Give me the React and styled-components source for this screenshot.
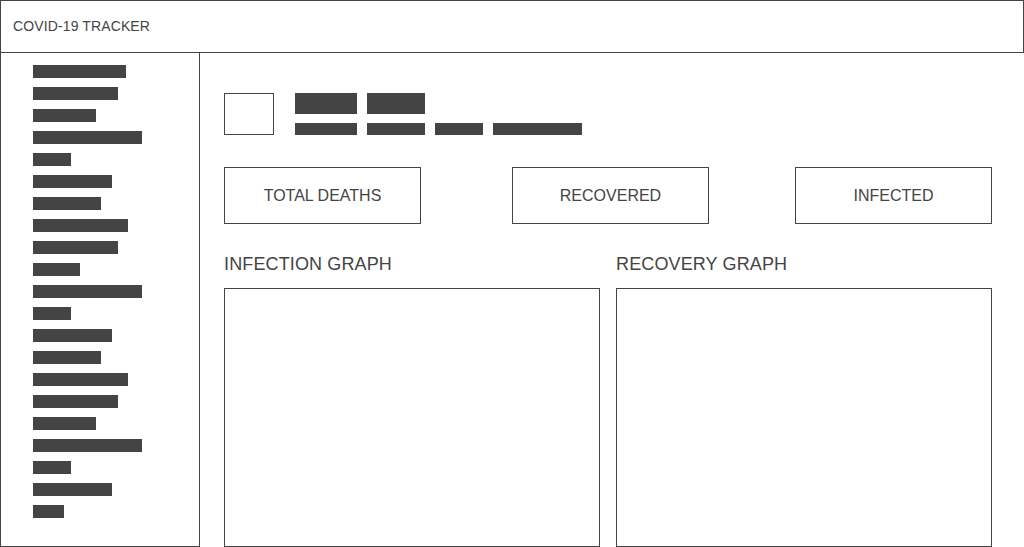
import React from "react";
import styled, { createGlobalStyle } from "styled-components";

const GlobalStyle = createGlobalStyle`
  html, body { margin: 0; padding: 0; background: #fff; }
  body { font-family: "Liberation Sans", Arial, sans-serif; color: #444; }
  * { box-sizing: border-box; }
`;

const Page = styled.div`
  display: flex;
  flex-direction: column;
  width: 1024px;
  height: 100vh;
`;

const Header = styled.header`
  height: 53px;
  flex: none;
  border: 1px solid #444;
  display: flex;
  align-items: center;
  padding: 0 0 1px 12px;
  font-size: 14px;
  line-height: 16px;
  letter-spacing: 0.12px;
  color: #444;
`;

const Body = styled.div`
  flex: 1;
  display: flex;
  min-height: 0;
`;

const Sidebar = styled.nav`
  width: 200px;
  flex: none;
  border: 1px solid #444;
  border-top: none;
  padding: 12px 0 0 32px;
  display: flex;
  flex-direction: column;
  gap: 9px;
`;

const NavBar = styled.div`
  height: 13px;
  width: ${(p) => p.$w}px;
  background: #444;
`;

const Main = styled.main`
  flex: 1;
  padding: 40px 32px 0 24px;
  display: flex;
  flex-direction: column;
`;

const Profile = styled.div`
  display: flex;
  gap: 21px;
  height: 42px;
`;

const Avatar = styled.div`
  width: 50px;
  height: 42px;
  border: 1px solid #444;
`;

const Lines = styled.div`
  display: flex;
  flex-direction: column;
  gap: 9px;
`;

const LineRow = styled.div`
  display: flex;
  gap: 10px;
`;

const Block = styled.div`
  width: ${(p) => p.$w}px;
  height: ${(p) => p.$h}px;
  background: #444;
`;

const Cards = styled.div`
  margin-top: 32px;
  display: grid;
  grid-template-columns: 288px 283px 197px;
`;

const Card = styled.div`
  width: 197px;
  height: 57px;
  border: 1px solid #444;
  display: flex;
  align-items: center;
  justify-content: center;
  font-size: 16px;
  color: #444;
`;

const Graphs = styled.div`
  margin-top: 30px;
  flex: 1;
  display: grid;
  grid-template-columns: 376px 376px;
  gap: 16px;
`;

const GraphCol = styled.section`
  display: flex;
  flex-direction: column;
`;

const GraphTitle = styled.div`
  font-size: 18px;
  line-height: 21px;
  letter-spacing: 0.13px;
  color: #444;
  margin-bottom: 13px;
`;

const GraphBox = styled.div`
  flex: 1;
  border: 1px solid #444;
`;

const navWidths = [93, 85, 63, 109, 38, 79, 68, 95, 85, 47, 109, 38, 79, 68, 95, 85, 63, 109, 38, 79, 31];

export default function App() {
  return (
    <>
      <GlobalStyle />
      <Page>
        <Header>COVID-19 TRACKER</Header>
        <Body>
          <Sidebar>
            {navWidths.map((w, i) => (
              <NavBar key={i} $w={w} />
            ))}
          </Sidebar>
          <Main>
            <Profile>
              <Avatar />
              <Lines>
                <LineRow>
                  <Block $w={62} $h={21} />
                  <Block $w={58} $h={21} />
                </LineRow>
                <LineRow>
                  <Block $w={62} $h={12} />
                  <Block $w={58} $h={12} />
                  <Block $w={48} $h={12} />
                  <Block $w={89} $h={12} />
                </LineRow>
              </Lines>
            </Profile>
            <Cards>
              <Card>TOTAL DEATHS</Card>
              <Card>RECOVERED</Card>
              <Card>INFECTED</Card>
            </Cards>
            <Graphs>
              <GraphCol>
                <GraphTitle>INFECTION GRAPH</GraphTitle>
                <GraphBox />
              </GraphCol>
              <GraphCol>
                <GraphTitle>RECOVERY GRAPH</GraphTitle>
                <GraphBox />
              </GraphCol>
            </Graphs>
          </Main>
        </Body>
      </Page>
    </>
  );
}
